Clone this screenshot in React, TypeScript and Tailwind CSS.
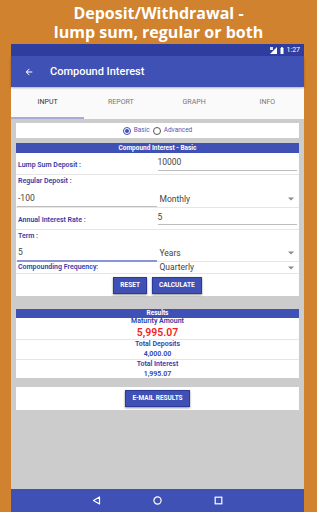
import React from 'react';

const Caret = () => (
  <svg width="6" height="4" viewBox="0 0 6 4" className="shrink-0">
    <path d="M0 0.5 L6 0.5 L3 3.5 Z" fill="#8a8a8a" />
  </svg>
);

const Label: React.FC<{ children: React.ReactNode }> = ({ children }) => (
  <div className="text-[7px] font-semibold text-[#2f40ab] leading-none">{children}</div>
);

const Select: React.FC<{ value: string }> = ({ value }) => (
  <div className="flex items-center justify-between pl-[2px] pr-[5px]">
    <span className="text-[8.5px] text-[#444] leading-none">{value}</span>
    <Caret />
  </div>
);

const Btn: React.FC<{ children: React.ReactNode }> = ({ children }) => (
  <div className="bg-[#3f51b5] border border-[#2b3a9a] shadow-[0_1px_2px_rgba(0,0,0,0.45)] text-white text-[6.5px] font-bold flex items-center justify-center px-[6px] h-[17px] leading-none">
    {children}
  </div>
);

export default function App() {
  return (
    <div className="w-[317px] h-[512px] bg-[#d0822f] flex flex-col overflow-hidden leading-none" style={{ fontFamily: 'Roboto, "Liberation Sans", sans-serif' }}>
      {/* promo headline */}
      <div className="h-[44px] flex flex-col items-center justify-center text-white font-bold text-[16px] leading-[19px] pt-[1px]" style={{ fontFamily: '"Open Sans", "DejaVu Sans", sans-serif' }}>
        <div>Deposit/Withdrawal -</div>
        <div>lump sum, regular or both</div>
      </div>

      {/* phone */}
      <div className="ml-[11px] w-[293px] flex-1 flex flex-col bg-[#cccccc]">
        {/* status bar */}
        <div className="h-[12px] bg-[#2f3e9e] flex items-center justify-end gap-[3px] pr-[4px]">
          <svg width="7" height="7" viewBox="0 0 7 7">
            <path d="M0 7 L7 0 L7 7 Z" fill="#ffffff" />
            <path d="M0 0 h3 v3 h-3 z" fill="#dfe3f5" />
          </svg>
          <svg width="4" height="7" viewBox="0 0 4 7">
            <rect x="0.5" y="1" width="3" height="6" fill="#ffffff" />
            <rect x="1.2" y="0" width="1.6" height="1" fill="#ffffff" />
          </svg>
          <span className="text-white text-[7px] leading-none">1:27</span>
        </div>

        {/* toolbar */}
        <div className="h-[31px] bg-[#3f51b5] flex items-center shadow-[0_1px_2px_rgba(0,0,0,0.3)] z-10">
          <svg width="10" height="10" viewBox="0 0 24 24" className="ml-[13px]">
            <path d="M20 11H7.83l5.59-5.59L12 4l-8 8 8 8 1.41-1.41L7.83 13H20v-2z" fill="#ffffff" />
          </svg>
          <span className="ml-[16px] text-white text-[11px] font-medium leading-none">Compound Interest</span>
        </div>

        {/* tabs */}
        <div className="h-[32px] bg-[#fafafa] grid grid-cols-4">
          {['INPUT', 'REPORT', 'GRAPH', 'INFO'].map((t, i) => (
            <div key={t} className={`flex items-center justify-center text-[7px] leading-none border-b-2 ${i === 0 ? 'text-[#333] border-[#a4acd9]' : 'text-[#777] border-transparent'}`}>
              {t}
            </div>
          ))}
        </div>

        {/* content */}
        <div className="flex-1 px-[5px] pt-[4px] flex flex-col">
          {/* radio card */}
          <div className="h-[15px] bg-white flex items-center justify-center gap-[3px]">
            <span className="w-[8px] h-[8px] rounded-full border border-[#3f51b5] flex items-center justify-center">
              <span className="w-[4px] h-[4px] rounded-full bg-[#3f51b5]" />
            </span>
            <span className="text-[6.5px] text-[#4f5db5] leading-none">Basic</span>
            <span className="w-[8px] h-[8px] rounded-full border border-[#555]" />
            <span className="text-[6.5px] text-[#4f5db5] leading-none">Advanced</span>
          </div>

          {/* input card */}
          <div className="mt-[5px] bg-white flex flex-col">
            <div className="h-[10px] bg-[#3f51b5] text-white text-[6.5px] font-bold flex items-center justify-center leading-none">
              Compound Interest - Basic
            </div>

            {/* lump sum */}
            <div className="h-[22px] grid grid-cols-2 items-center border-b border-[#e6e6e6]">
              <div className="pl-[2px] pt-[3px]"><Label>Lump Sum Deposit :</Label></div>
              <div className="pr-[2px] pt-[2px]">
                <div className="border-b border-[#bdbdbd] pb-[3px] text-[8.5px] text-[#444] leading-none">10000</div>
              </div>
            </div>

            {/* regular deposit */}
            <div className="h-[33px] flex flex-col border-b border-[#e6e6e6]">
              <div className="pl-[2px] pt-[3px]"><Label>Regular Deposit :</Label></div>
              <div className="grid grid-cols-2 items-center mt-[9px]">
                <div className="pl-[1px] pr-[1px]">
                  <div className="border-b border-[#bdbdbd] pb-[3px] pl-[1px] text-[8.5px] text-[#444] leading-none">-100</div>
                </div>
                <div className="-mt-[3px]"><Select value="Monthly" /></div>
              </div>
            </div>

            {/* annual rate */}
            <div className="h-[22px] grid grid-cols-2 items-center border-b border-[#e6e6e6]">
              <div className="pl-[2px] pt-[3px]"><Label>Annual Interest Rate :</Label></div>
              <div className="pr-[2px] pt-[1px]">
                <div className="border-b border-[#bdbdbd] pb-[3px] text-[8.5px] text-[#444] leading-none">5</div>
              </div>
            </div>

            {/* term */}
            <div className="h-[32px] flex flex-col border-b border-[#e6e6e6]">
              <div className="pl-[2px] pt-[3px]"><Label>Term :</Label></div>
              <div className="grid grid-cols-2 items-center mt-[8px]">
                <div className="pl-[1px] pr-[1px]">
                  <div className="border-b-2 border-[#8a94d6] pb-[3px] pl-[1px] text-[8.5px] text-[#444] leading-none">5</div>
                </div>
                <div className="-mt-[4px]"><Select value="Years" /></div>
              </div>
            </div>

            {/* compounding */}
            <div className="h-[12px] grid grid-cols-2 items-center border-b border-[#e6e6e6]">
              <div className="pl-[2px]"><Label>Compounding Frequency:</Label></div>
              <Select value="Quarterly" />
            </div>

            <div className="flex justify-center gap-[5px] pt-[3px] pb-[2px]">
              <Btn>RESET</Btn>
              <Btn>CALCULATE</Btn>
            </div>
          </div>

          {/* results */}
          <div className="mt-[13px] bg-white flex flex-col">
            <div className="h-[9px] bg-[#3f51b5] text-white text-[6.5px] font-bold flex items-center justify-center leading-none">
              Results
            </div>
            <div className="h-[22px] flex flex-col items-center justify-center gap-[3px] border-b border-[#e6e6e6]">
              <span className="text-[7px] font-semibold text-[#2f40ab] leading-none">Maturity Amount</span>
              <span className="text-[10.5px] font-semibold text-[#f21d1d] leading-none">5,995.07</span>
            </div>
            <div className="h-[20px] flex flex-col items-center justify-center gap-[3px] border-b border-[#e6e6e6]">
              <span className="text-[7px] font-semibold text-[#2f40ab] leading-none">Total Deposits</span>
              <span className="text-[7px] font-semibold text-[#2f40ab] leading-none">4,000.00</span>
            </div>
            <div className="h-[18px] flex flex-col items-center justify-center gap-[3px]">
              <span className="text-[7px] font-semibold text-[#2f40ab] leading-none">Total Interest</span>
              <span className="text-[7px] font-semibold text-[#2f40ab] leading-none">1,995.07</span>
            </div>
          </div>

          {/* email */}
          <div className="mt-[9px] h-[23px] bg-white flex items-center justify-center">
            <Btn>E-MAIL RESULTS</Btn>
          </div>
        </div>

        {/* nav bar */}
        <div className="h-[23px] bg-[#3f51b5] flex items-center justify-center gap-[52px]">
          <svg width="9" height="9" viewBox="0 0 9 9">
            <path d="M7.5 1 L7.5 8 L1.5 4.5 Z" fill="none" stroke="#ffffff" strokeWidth="1.2" strokeLinejoin="round" />
          </svg>
          <svg width="9" height="9" viewBox="0 0 9 9">
            <circle cx="4.5" cy="4.5" r="3.6" fill="none" stroke="#ffffff" strokeWidth="1.2" />
          </svg>
          <svg width="9" height="9" viewBox="0 0 9 9">
            <rect x="1.2" y="1.2" width="6.6" height="6.6" fill="none" stroke="#ffffff" strokeWidth="1.2" />
          </svg>
        </div>
      </div>
    </div>
  );
}
